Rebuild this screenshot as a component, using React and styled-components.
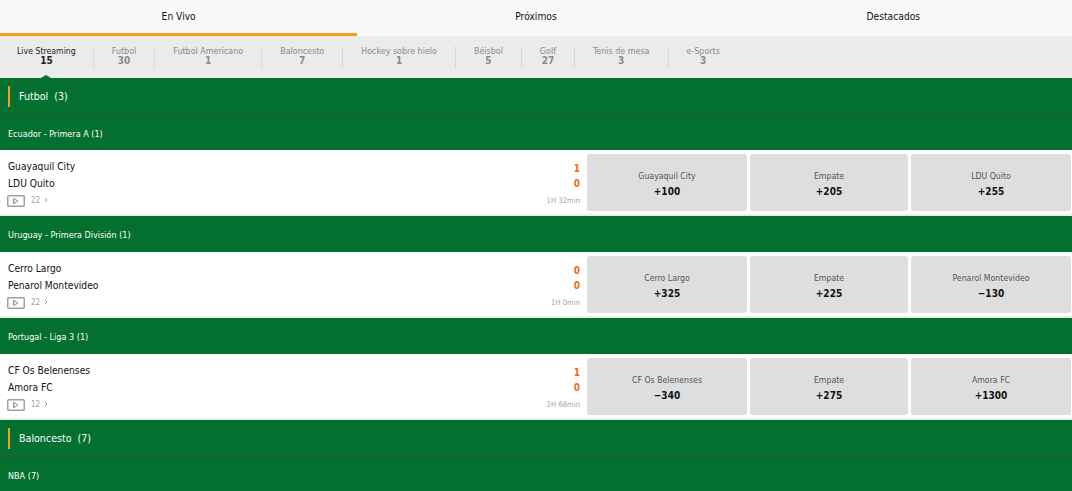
import React from "react";
import styled, { createGlobalStyle } from "styled-components";

const Global = createGlobalStyle`
  html, body { margin: 0; padding: 0; background: #fff; }
  body { font-family: "DejaVu Sans Condensed", "DejaVu Sans", Tahoma, sans-serif; width: 1072px; height: 491px; overflow: hidden; }
`;
const Tabs = styled.div`display: flex; height: 36px; background: #f9f9f9;`;
const Tab = styled.div`
  width: 357.33px; height: 36px; box-sizing: border-box; padding-top: 9px; text-align: center;
  font-size: 10.2px; line-height: 15px; color: #111;
  border-bottom: ${p => (p.$active ? "3px solid #f99d1f" : "3px solid transparent")};
`;
const SportBar = styled.div`display: flex; height: 42px; background: #ebebeb; padding-top: 10px; box-sizing: border-box;`;
const Sport = styled.div`
  position: relative; padding: 0 ${p => (p.$active ? "17px" : "18px")}; height: 22px; text-align: center;
  font-size: ${p => (p.$active ? "8.7px" : "8.9px")}; line-height: 10px; color: ${p => (p.$active ? "#222" : "#8a8a8a")};
  & + & { border-left: 1px solid #d9d9d9; }
  b { display: block; font-size: 10px; line-height: 10px; font-weight: 700; color: ${p => (p.$active ? "#222" : "#8a8a8a")}; }
  ${p => p.$active && `&::after { content: ""; position: absolute; left: 50%; margin-left: -5px; bottom: -10px; border: 5px solid transparent; border-top: 0; border-bottom: 3px solid #03702f; }`}
`;
const SportHeader = styled.div`
  display: flex; align-items: center; height: 37px; background: #03702f; box-sizing: border-box;
  border-bottom: 1px solid #3d4a40; padding-left: 8px; color: #fff; font-size: 10.6px;
  span { border-left: 2px solid #f99d1f; height: 21px; line-height: 21px; padding-left: 9px; white-space: pre; }
`;
const League = styled.div`
  height: 36px; background: #03702f; color: #fff; font-size: 9px; line-height: 39px; padding-left: 8px;
  ${SportHeader} + & { height: 35px; line-height: 38px; }
`;
const Row = styled.div`
  display: flex; height: 66px; box-sizing: border-box; background: #fff; border-bottom: 2px solid #ebebeb;
  padding: 4px 1px 3px 8px;
`;
const Info = styled.div`flex: 1; display: flex; flex-direction: column; padding: 4px 7px 0 0;`;
const Line = styled.div`
  display: flex; justify-content: space-between; align-items: center; height: 17px; font-size: 10.2px; color: #111;
  b { color: #f26a0f; font-size: 10px; }
  &:first-child b { margin-top: 4px; }
`;
const Meta = styled.div`
  display: flex; justify-content: space-between; align-items: center; height: 14px; margin-top: 1px;
  color: #a3a3a3; font-size: 7.6px;
  span { white-space: pre; word-spacing: -1px; }
`;
const Replay = styled.div`display: flex; align-items: center; gap: 4px; margin-left: -1px; font-size: 8px;`;
const CamIcon = styled.svg`margin: 1px 2px 0 0; display: block;`;
const Odds = styled.div`display: flex; gap: 3px;`;
const Odd = styled.div`
  width: ${p => p.$w}px; height: 57px; background: #dedede; border-radius: 3px; box-sizing: border-box; padding-top: 16px;
  text-align: center; font-size: 8.7px; line-height: 13px; color: #555;
  b { display: block; margin-top: 2px; font-size: 10px; color: #111; }
`;
const Cam = () => (
  <CamIcon width="18" height="12" viewBox="0 0 18 12"><rect x=".75" y=".75" width="16.500" height="10.500" rx="1" fill="none" stroke="#a0a0a0" strokeWidth="1.500"/><path d="M6.500 3v6M7 3.500v5l4-2.500z" fill="none" stroke="#999"/></CamIcon>
);
const Chevron = () => (
  <svg width="4" height="6" viewBox="0 0 4 6"><path d="M1 1l2 2-2 2" fill="none" stroke="#999"/></svg>
);
const sports = [["Live Streaming", 15], ["Futbol", 30], ["Futbol Americano", 1], ["Baloncesto", 7], ["Hockey sobre hielo", 1], ["Béisbol", 5], ["Golf", 27], ["Tenis de mesa", 3], ["e-Sports", 3]];
const events = [
  { league: "Ecuador - Primera A (1)", a: "Guayaquil City", b: "LDU Quito", sa: 1, sb: 0, n: 22, t: "1H  32min", o: ["+100", "+205", "+255"] },
  { league: "Uruguay - Primera División (1)", a: "Cerro Largo", b: "Penarol Montevideo", sa: 0, sb: 0, n: 22, t: "1H  0min", o: ["+325", "+225", "−130"] },
  { league: "Portugal - Liga 3 (1)", a: "CF Os Belenenses", b: "Amora FC", sa: 1, sb: 0, n: 12, t: "2H  68min", o: ["−340", "+275", "+1300"] },
];
export default function App() {
  return (
    <>
      <Global />
      <Tabs><Tab $active>En Vivo</Tab><Tab>Próximos</Tab><Tab>Destacados</Tab></Tabs>
      <SportBar>
        {sports.map(([n, c], i) => <Sport key={n} $active={i === 0}>{n}<b>{c}</b></Sport>)}
      </SportBar>
      <SportHeader><span>Futbol  (3)</span></SportHeader>
      {events.map(e => (
        <React.Fragment key={e.a}>
          <League>{e.league}</League>
          <Row>
            <Info>
              <Line>{e.a}<b>{e.sa}</b></Line>
              <Line>{e.b}<b>{e.sb}</b></Line>
              <Meta><Replay><Cam /><span>{e.n}</span><Chevron /></Replay><span>{e.t}</span></Meta>
            </Info>
            <Odds>
              <Odd $w={160}>{e.a}<b>{e.o[0]}</b></Odd>
              <Odd $w={158}>Empate<b>{e.o[1]}</b></Odd>
              <Odd $w={160}>{e.b}<b>{e.o[2]}</b></Odd>
            </Odds>
          </Row>
        </React.Fragment>
      ))}
      <SportHeader><span>Baloncesto  (7)</span></SportHeader>
      <League>NBA (7)</League>
    </>
  );
}
